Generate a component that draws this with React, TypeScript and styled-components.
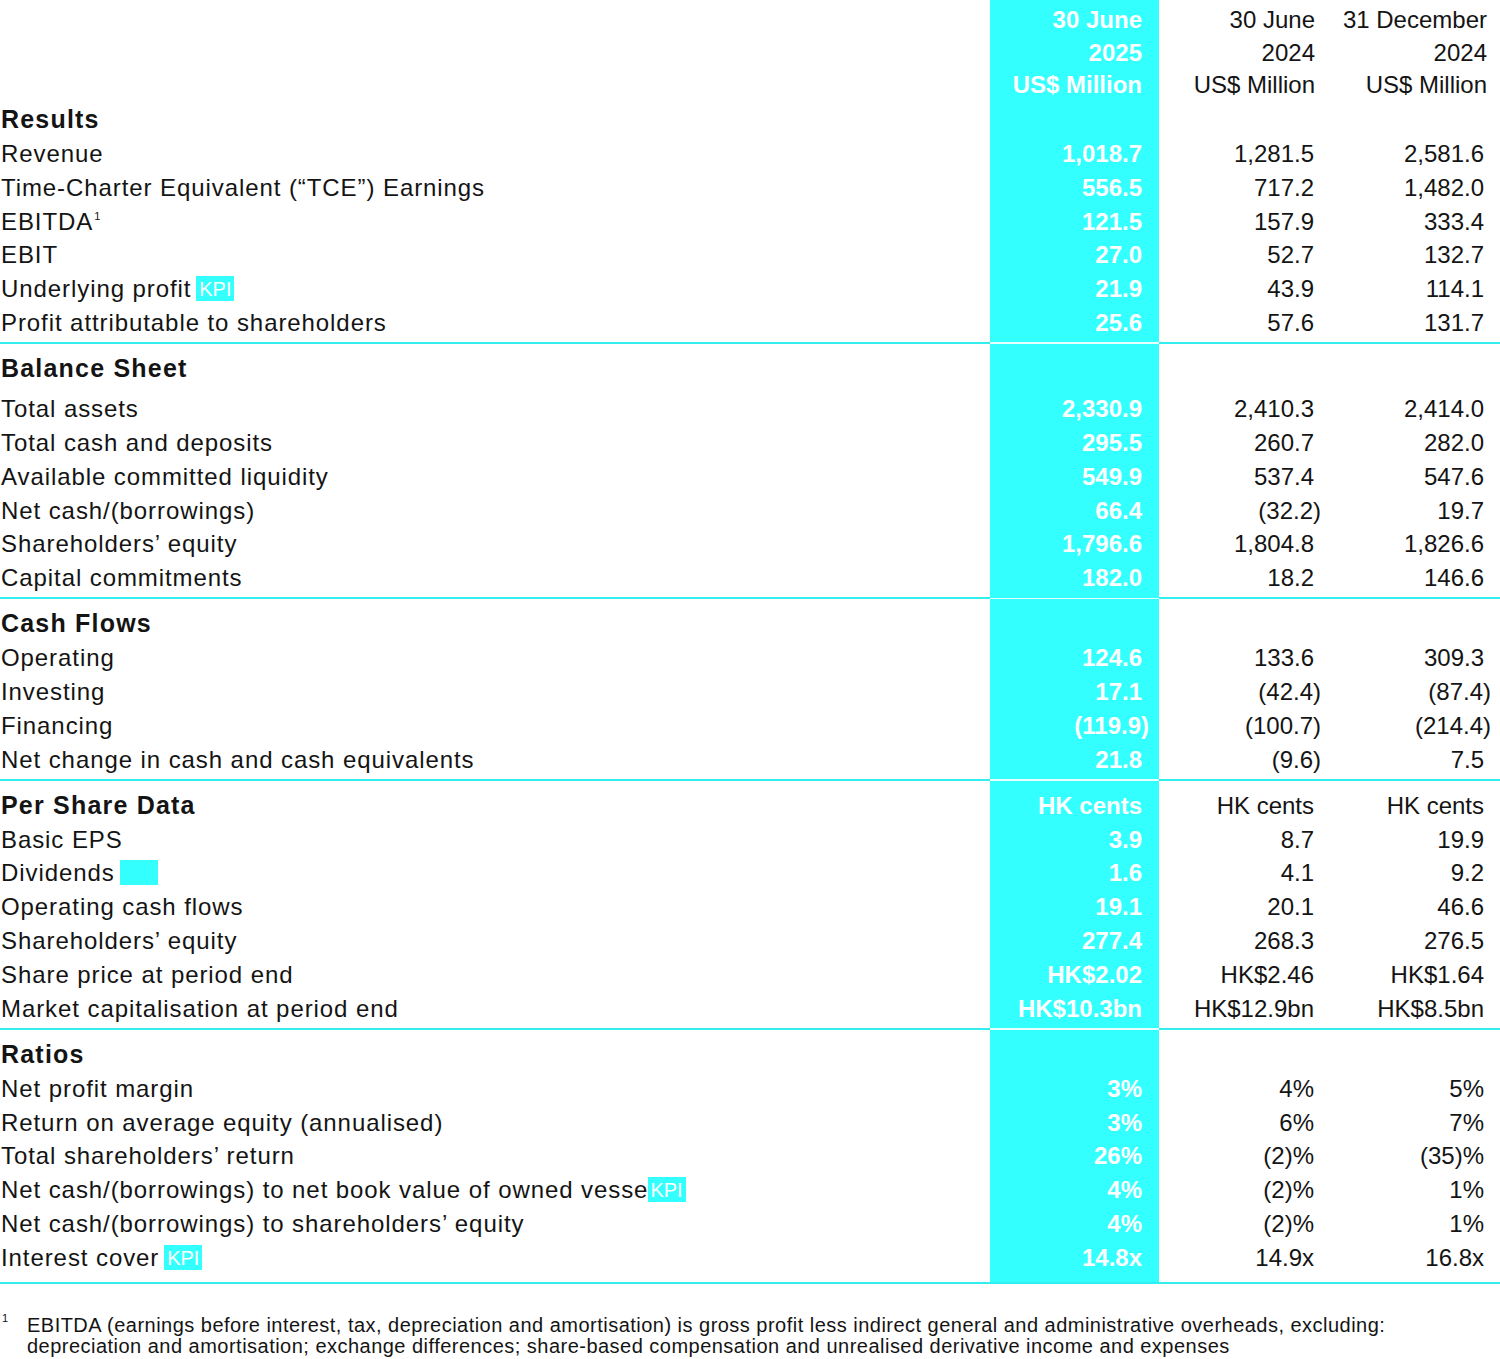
import React from "react";
import styled, { createGlobalStyle } from "styled-components";

const CYAN = "#33ffff";
const RULE = "#33eeee";

const GlobalStyle = createGlobalStyle`
  html, body { margin: 0; padding: 0; background: #ffffff; }
  body {
    font-family: "Liberation Sans", Arial, Helvetica, sans-serif;
    color: #141414;
  }
`;

const Page = styled.div`
  width: 1500px;
`;

const COLS = "990px 169px 170px 171px";
const ROW_H = 33.85;

const Row = styled.div<{ $extra?: number }>`
  display: grid;
  grid-template-columns: ${COLS};
  height: ${(p) => ROW_H + (p.$extra || 0)}px;
  font-size: 24px;
  line-height: ${ROW_H}px;
`;

const Label = styled.div<{ $bold?: boolean }>`
  display: flex;
  align-items: flex-start;
  white-space: nowrap;
  padding-left: 1px;
  font-weight: ${(p) => (p.$bold ? 700 : 400)};
  font-size: ${(p) => (p.$bold ? 25 : 24)}px;
  letter-spacing: ${(p) => (p.$bold ? 1.2 : 0.92)}px;
`;

const HiCell = styled.div`
  background: ${CYAN};
  color: #ffffff;
  font-weight: 700;
  text-align: right;
  padding-right: 17px;
  white-space: nowrap;
`;

const Cell = styled.div<{ $pr: number }>`
  text-align: right;
  padding-right: ${(p) => p.$pr}px;
  white-space: nowrap;
`;

const Hang = styled.span`
  margin-right: -7px;
`;

const Sup = styled.sup`
  font-size: 11px;
  line-height: 0;
  vertical-align: 0;
  position: relative;
  top: -10px;
  margin-left: 1px;
  letter-spacing: 0;
`;

const Badge = styled.span<{ $overlap?: number }>`
  display: inline-flex;
  align-items: center;
  justify-content: center;
  background: ${CYAN};
  color: #ffffff;
  font-size: 20px;
  font-weight: 400;
  letter-spacing: 0;
  line-height: 1;
  height: 25px;
  min-width: 38px;
  padding: 1px 2px 0;
  box-sizing: border-box;
  margin-left: ${(p) => (p.$overlap ? -p.$overlap : 5)}px;
  margin-top: 4px;
  position: relative;
`;

const Header = styled.div`
  display: grid;
  grid-template-columns: ${COLS};
  font-size: 24px;
  line-height: 32.5px;
  height: 103px;
`;

const HeadHi = styled.div`
  background: ${CYAN};
  color: #ffffff;
  font-weight: 700;
  text-align: right;
  padding: 4px 17px 0 0;
  box-sizing: border-box;
`;

const HeadCell = styled.div<{ $pr: number }>`
  text-align: right;
  padding: 4px ${(p) => p.$pr}px 0 0;
  white-space: nowrap;
`;

const Divider = styled.div`
  display: grid;
  grid-template-columns: ${COLS};
  height: 12.25px;
`;

const RuleCell = styled.div`
  position: relative;
  &::after {
    content: "";
    position: absolute;
    left: 0;
    right: 0;
    top: 2px;
    height: 2px;
    background: ${RULE};
  }
`;

const RuleHi = styled.div`
  position: relative;
  background: ${CYAN};
  &::after {
    content: "";
    position: absolute;
    left: 0;
    right: 0;
    top: 2.5px;
    height: 1.5px;
    background: #e8ffff;
  }
`;

const BottomRule = styled.div`
  display: grid;
  grid-template-columns: ${COLS};
  height: 10px;
`;

const BottomCell = styled.div<{ $hi?: boolean }>`
  position: relative;
  background: ${(p) => (p.$hi ? CYAN : "transparent")};
  height: ${(p) => (p.$hi ? 9 : 10)}px;
  &::after {
    content: "";
    position: absolute;
    left: 0;
    right: 0;
    top: 7px;
    height: 2px;
    background: ${RULE};
  }
`;

const Footnote = styled.div`
  display: flex;
  margin-top: 30px;
  font-size: 20px;
  line-height: 21px;
  letter-spacing: 0.48px;
`;

const FootMark = styled.div`
  width: 27px;
  flex: none;
  font-size: 11px;
  line-height: 14px;
  padding-left: 2px;
  margin-top: -4px;
  box-sizing: border-box;
  letter-spacing: 0;
`;

const FootText = styled.div`
  flex: 1;
  white-space: nowrap;
`;

type Val = string;

function Num({ v }: { v: Val }) {
  if (v.endsWith(")")) {
    return (
      <>
        {v.slice(0, -1)}
        <Hang>)</Hang>
      </>
    );
  }
  return <>{v}</>;
}

type RowDef = {
  label: string;
  vals: [Val, Val, Val];
  sup?: boolean;
  badge?: "kpi" | "empty" | "kpi-over";
};

type Section = {
  title: string;
  titleVals?: [Val, Val, Val];
  titleExtra?: number;
  rows: RowDef[];
};

const sections: Section[] = [
  {
    title: "Results",
    rows: [
      { label: "Revenue", vals: ["1,018.7", "1,281.5", "2,581.6"] },
      { label: "Time-Charter Equivalent (\u201cTCE\u201d) Earnings", vals: ["556.5", "717.2", "1,482.0"] },
      { label: "EBITDA", sup: true, vals: ["121.5", "157.9", "333.4"] },
      { label: "EBIT", vals: ["27.0", "52.7", "132.7"] },
      { label: "Underlying profit", badge: "kpi", vals: ["21.9", "43.9", "114.1"] },
      { label: "Profit attributable to shareholders", vals: ["25.6", "57.6", "131.7"] },
    ],
  },
  {
    title: "Balance Sheet",
    titleExtra: 6,
    rows: [
      { label: "Total assets", vals: ["2,330.9", "2,410.3", "2,414.0"] },
      { label: "Total cash and deposits", vals: ["295.5", "260.7", "282.0"] },
      { label: "Available committed liquidity", vals: ["549.9", "537.4", "547.6"] },
      { label: "Net cash/(borrowings)", vals: ["66.4", "(32.2)", "19.7"] },
      { label: "Shareholders\u2019 equity", vals: ["1,796.6", "1,804.8", "1,826.6"] },
      { label: "Capital commitments", vals: ["182.0", "18.2", "146.6"] },
    ],
  },
  {
    title: "Cash Flows",
    rows: [
      { label: "Operating", vals: ["124.6", "133.6", "309.3"] },
      { label: "Investing", vals: ["17.1", "(42.4)", "(87.4)"] },
      { label: "Financing", vals: ["(119.9)", "(100.7)", "(214.4)"] },
      { label: "Net change in cash and cash equivalents", vals: ["21.8", "(9.6)", "7.5"] },
    ],
  },
  {
    title: "Per Share Data",
    titleVals: ["HK cents", "HK cents", "HK cents"],
    rows: [
      { label: "Basic EPS", vals: ["3.9", "8.7", "19.9"] },
      { label: "Dividends", badge: "empty", vals: ["1.6", "4.1", "9.2"] },
      { label: "Operating cash flows", vals: ["19.1", "20.1", "46.6"] },
      { label: "Shareholders\u2019 equity", vals: ["277.4", "268.3", "276.5"] },
      { label: "Share price at period end", vals: ["HK$2.02", "HK$2.46", "HK$1.64"] },
      { label: "Market capitalisation at period end", vals: ["HK$10.3bn", "HK$12.9bn", "HK$8.5bn"] },
    ],
  },
  {
    title: "Ratios",
    rows: [
      { label: "Net profit margin", vals: ["3%", "4%", "5%"] },
      { label: "Return on average equity (annualised)", vals: ["3%", "6%", "7%"] },
      { label: "Total shareholders\u2019 return", vals: ["26%", "(2)%", "(35)%"] },
      { label: "Net cash/(borrowings) to net book value of owned vessels", badge: "kpi-over", vals: ["4%", "(2)%", "1%"] },
      { label: "Net cash/(borrowings) to shareholders\u2019 equity", vals: ["4%", "(2)%", "1%"] },
      { label: "Interest cover", badge: "kpi", vals: ["14.8x", "14.9x", "16.8x"] },
    ],
  },
];

function DataRow({ r, bold, extra }: { r: RowDef; bold?: boolean; extra?: number }) {
  return (
    <Row $extra={extra}>
      <Label $bold={bold}>
        <span>
          {r.label}
          {r.sup && <Sup>1</Sup>}
        </span>
        {r.badge === "kpi" && <Badge>KPI</Badge>}
        {r.badge === "kpi-over" && <Badge $overlap={20}>KPI</Badge>}
        {r.badge === "empty" && <Badge />}
      </Label>
      <HiCell>
        <Num v={r.vals[0]} />
      </HiCell>
      <Cell $pr={15}>
        <Num v={r.vals[1]} />
      </Cell>
      <Cell $pr={16}>
        <Num v={r.vals[2]} />
      </Cell>
    </Row>
  );
}

function SectionDivider() {
  return (
    <Divider>
      <RuleCell />
      <RuleHi />
      <RuleCell />
      <RuleCell />
    </Divider>
  );
}

export default function App() {
  return (
    <Page>
      <GlobalStyle />
      <Header>
        <div />
        <HeadHi>
          30 June
          <br />
          2025
          <br />
          US$ Million
        </HeadHi>
        <HeadCell $pr={14}>
          30 June
          <br />
          2024
          <br />
          US$ Million
        </HeadCell>
        <HeadCell $pr={13}>
          31 December
          <br />
          2024
          <br />
          US$ Million
        </HeadCell>
      </Header>
      {sections.map((s, i) => (
        <React.Fragment key={s.title}>
          {i > 0 && <SectionDivider />}
          <DataRow
            bold
            extra={s.titleExtra}
            r={{ label: s.title, vals: s.titleVals || ["", "", ""] }}
          />
          {s.rows.map((r) => (
            <DataRow key={r.label} r={r} />
          ))}
        </React.Fragment>
      ))}
      <BottomRule>
        <BottomCell />
        <BottomCell $hi />
        <BottomCell />
        <BottomCell />
      </BottomRule>
      <Footnote>
        <FootMark>1</FootMark>
        <FootText>
          EBITDA (earnings before interest, tax, depreciation and amortisation) is gross profit less indirect general and
          administrative overheads, excluding:
          <br />
          depreciation and amortisation; exchange differences; share-based compensation and unrealised derivative
          income and expenses
        </FootText>
      </Footnote>
    </Page>
  );
}
